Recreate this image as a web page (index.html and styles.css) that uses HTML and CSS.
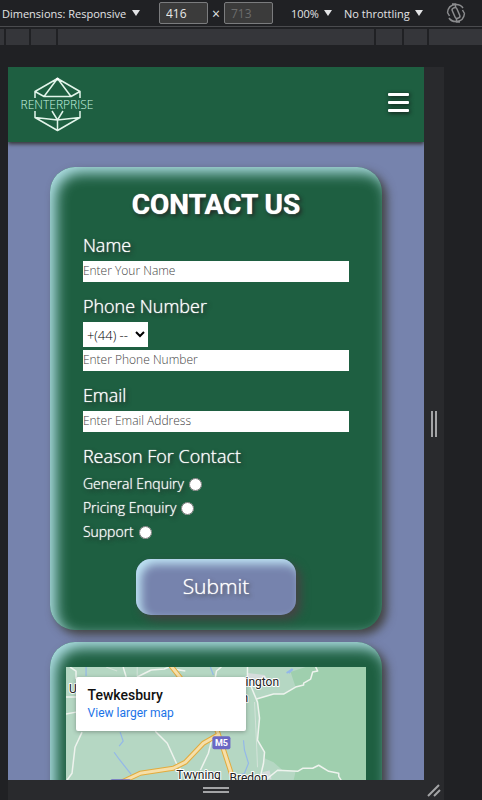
FILE: index.html
```html
<!DOCTYPE html>
<html lang="en">
<head>
<meta charset="utf-8">
<meta name="viewport" content="width=device-width, initial-scale=1">
<title>Renterprise - Contact Us</title>
<link rel="stylesheet" href="styles.css">
</head>
<body>
<div class="toolbar">
  <label class="picker"><select class="picker-select" aria-label="Device"><option>Dimensions: Responsive</option></select><svg class="caret" viewBox="0 0 8 6"><path d="M0 0h8L4 6z"/></svg></label>
  <div class="size">
    <input class="size-input" type="text" value="416" aria-label="Width">
    <span class="times">×</span>
    <input class="size-input" type="text" value="713" aria-label="Height" disabled>
  </div>
  <label class="picker"><select class="picker-select" aria-label="Zoom"><option>100%</option></select><svg class="caret" viewBox="0 0 8 6"><path d="M0 0h8L4 6z"/></svg></label>
  <label class="picker"><select class="picker-select" aria-label="Throttling"><option>No throttling</option></select><svg class="caret" viewBox="0 0 8 6"><path d="M0 0h8L4 6z"/></svg></label>
  <button class="rotate" type="button" aria-label="Rotate">
    <svg width="20" height="20" viewBox="0 0 20 20" fill="none" stroke="#8b8c8e" stroke-width="1.500">
      <rect x="7.500" y="4.500" width="5" height="11" rx="2" transform="rotate(-24 10 10)"/>
      <path d="M9 1.500C5 2 2 5 1.500 9.500M6 1h3.500v3.500M1.500 9.500L3.500 13M3 15c1.500 2.500 4 3.500 7 3.500"/>
      <path d="M11 18.500c4-.5 7-3.500 7.500-8M14 19h-3.500v-3.500M18.500 10.500L16.500 7M17 5c-1.500-2.500-4-3.500-7-3.500"/>
    </svg>
  </button>
</div>
<div class="ruler"><i></i><i></i><i></i><i></i><i></i><i></i><i></i></div>

<div class="stage">
  <div class="page">
    <header class="site-header">
      <a class="logo" href="#">
        <svg width="72" height="56" viewBox="0 0 72 56" role="img" aria-label="Renterprise">
          <g fill="none" stroke="#e2f5ea" stroke-width="1.500" stroke-linejoin="round">
            <path d="M13 21V14.500L35.500 1.500L58 14.500V21M13 14.500L22 19.500H49L58 14.500M22 19.500L35.500 1.500L49 19.500"/>
            <path d="M13 34V40.500L35.500 53.500L58 40.500V34M13 40.500L35.500 43L58 40.500M30 34L35.500 43L41 34M35.500 43V53.500"/>
          </g>
          <circle cx="35.500" cy="2" r="1.500" fill="#fff"/>
          <text class="logo-text" x="35" y="32" text-anchor="middle">RENTERPRISE</text>
        </svg>
      </a>
      <button class="menu" type="button" aria-label="Menu"><span></span><span></span><span></span></button>
    </header>

    <main class="content">
      <form class="card form-card">
        <h1 class="title">CONTACT US</h1>
        <div class="field">
          <label class="label" for="name">Name</label>
          <input class="input" id="name" type="text" placeholder="Enter Your Name">
        </div>
        <div class="field">
          <label class="label" for="phone">Phone Number</label>
          <select class="code" aria-label="Country code"><option>+(44) -- UK</option></select>
          <input class="input" id="phone" type="tel" placeholder="Enter Phone Number">
        </div>
        <div class="field">
          <label class="label" for="email">Email</label>
          <input class="input" id="email" type="email" placeholder="Enter Email Address">
        </div>
        <fieldset class="reasons">
          <legend class="label">Reason For Contact</legend>
          <label class="reason">General Enquiry<input type="radio" name="reason"></label>
          <label class="reason">Pricing Enquiry<input type="radio" name="reason"></label>
          <label class="reason">Support<input type="radio" name="reason"></label>
        </fieldset>
        <button class="submit" type="submit">Submit</button>
      </form>

      <section class="card map-card">
        <div class="map">
          <svg class="map-art" viewBox="0 0 300 200" preserveAspectRatio="xMinYMin slice">
            <rect width="300" height="200" fill="#b5d7c3"/>
            <path fill="#9fcfae" d="M190 32L207 27H217L229 20L224 5L239 0H300V200H215L227 113L229 104L216 103L207 95L198 91V85L191 73L193 51L191 35z"/>
            <path fill="#d5dcdc" d="M181 6L198 8L203 15L190 20L180 17zM196 105L203 103L205 112H194z"/>
            <g fill="none" stroke="#94b8e8" stroke-width="1.200">
              <path d="M20 0V9M54 65L57 74L53 79M48 85L53 92L65 107M144 0L147 8M177 73L178 83L182 96L178 106L170 109"/>
              <path d="M220 6L226 2L222 6" stroke-width="2"/>
            </g>
            <g fill="none" stroke="#d3e3d9" stroke-width="1">
              <path d="M71 0V10M40 0L51 4M188 35L190 75L191 100M60 200L100 160"/>
            </g>
            <g fill="none" stroke="#eef3ee" stroke-width="1.500" stroke-linejoin="round">
              <path d="M4 0L10 4V12M57 0L60 10M71 10L85 3L98 2L103 0M107 2L119 4M149 10L150 4L155 0M0 30H10M0 47L10 45"/>
              <path d="M89 64L101 76L111 98L118 106M16 65L9 80L6 106L1 113M146 70L142 86L134 103"/>
              <path d="M181 0V10L186 23L191 35L193 51L191 73L198 85L197 96L193 113"/>
              <path d="M190 32L207 27H217L229 20L237 18V16L244 12L246 5L251 4L249 0"/>
              <path d="M201 111L211 103L231 104L236 101L246 101L252 98L262 104L272 106V109L275 114"/>
            </g>
            <g fill="none" stroke-linejoin="round">
              <path stroke="#e3ab3c" stroke-width="5" d="M104 -2L115 12L151 64L157 82L168 116M151 68L137 76L119 95L107 101L74 106L55 115L40 119"/>
              <path stroke="#f6dfa9" stroke-width="3" d="M104 -2L115 12L151 64L157 82L168 116M151 68L137 76L119 95L107 101L74 106L55 115L40 119"/>
            </g>
            <rect x="146" y="69" width="18" height="13" rx="2" fill="#6b68c4"/>
            <rect x="44" y="112" width="21" height="13" rx="2" fill="#6b68c4"/>
            <text class="road-label" x="155" y="79" text-anchor="middle">M5</text>
            <g class="place">
              <text x="3" y="26">U</text>
              <text x="179" y="19">ington</text>
              <text x="175" y="35">n</text>
              <text x="110" y="112">Twyning</text>
              <text x="163" y="115">Bredon</text>
            </g>
          </svg>
          <div class="popup">
            <strong class="popup-title">Tewkesbury</strong>
            <a class="popup-link" href="#">View larger map</a>
          </div>
        </div>
      </section>
    </main>
  </div>
  <div class="handle handle-right"></div>
  <div class="handle handle-bottom"></div>
  <div class="handle handle-corner"><svg width="14" height="14" viewBox="0 0 14 14" stroke="#a3a4a6" stroke-width="2"><path d="M1 13L12 2M7 13L13 7"/></svg></div>
</div>
</body>
</html>
```
FILE: styles.css
```css
*,
*::before {
  box-sizing: border-box;
}

body {
  margin: 0;
  height: 100vh;
  display: flex;
  flex-direction: column;
  overflow: hidden;
  background: #202124;
  font-family: "Open Sans", "Noto Sans", sans-serif;
}

button, input, select {
  font-family: inherit;
  font-weight: inherit;
  margin: 0;
}

/* Toolbar */
.toolbar {
  display: flex;
  align-items: center;
  height: 27px;
  padding: 0 16px 0 2px;
  border-bottom: 1px solid #4a4b4e;
  color: #e3e4e6;
  font-size: 11px;
  white-space: nowrap;
}

.picker {
  display: flex;
  align-items: center;
  gap: 5px;
}

.picker-select {
  appearance: none;
  border: 0;
  padding: 0;
  background: none;
  color: inherit;
  font-size: 11px;
}

.caret {
  width: 8px;
  height: 6px;
  fill: #e3e4e6;
}

.size {
  display: flex;
  align-items: center;
  gap: 4px;
  margin: 0 18px 0 19px;
}

.size-input {
  width: 49px;
  height: 22px;
  padding: 0 6px;
  border: 1px solid #7b7c7e;
  border-radius: 2px;
  background: #3b3b3b;
  color: #e8e8e8;
  font-size: 12px;
}

.size-input:disabled {
  color: #6c6c6c;
}

.times {
  width: 8px;
  font-size: 14px;
  text-align: center;
}

.size + .picker {
  margin-right: 12px;
}

.rotate {
  display: flex;
  margin-left: auto;
  padding: 0;
  border: 0;
  background: none;
}

.ruler {
  display: grid;
  grid-template-columns: 4px 23px 25px 1fr 26px 23px 53px;
  column-gap: 2px;
  height: 16px;
  margin-top: 2px;
}

.ruler i {
  background: #35363a;
}

/* Viewport frame */
.stage {
  flex: 1;
  min-height: 0;
  display: grid;
  grid-template-columns: 1fr 20px;
  grid-template-rows: minmax(0, 1fr) 20px;
  padding: 22px 38px 0 8px;
}

.handle {
  display: flex;
  align-items: center;
  justify-content: center;
  background: #292a2d;
}

.handle-right::before {
  content: "";
  width: 6px;
  height: 26px;
  border: solid #a3a4a6;
  border-width: 0 2px;
}

.handle-bottom {
  grid-row: 2;
}

.handle-bottom::before {
  content: "";
  width: 26px;
  height: 6px;
  border: solid #a3a4a6;
  border-width: 2px 0;
}

/* Site */
.page {
  overflow: hidden;
  background: #7683ad;
  color: #fff;
  font-weight: 300;
}

.site-header {
  position: relative;
  display: flex;
  align-items: center;
  justify-content: space-between;
  height: 75px;
  padding: 0 15px 0 14px;
  background: #1e5f41;
  box-shadow: 0 2px 4px #333;
}

.logo svg {
  display: block;
  overflow: visible;
}

.logo-text {
  fill: #c6f5e0;
  font-size: 12px;
}

.menu {
  display: flex;
  flex-direction: column;
  gap: 5px;
  margin-bottom: 4px;
  padding: 0;
  border: 0;
  background: none;
}

.menu span {
  width: 21px;
  height: 3px;
  border-radius: 1px;
  background: #fff;
  box-shadow: 1px 1px 4px #111;
}

.content {
  display: flex;
  flex-direction: column;
  gap: 12px;
  padding: 25px 10% 0;
}

.card {
  border-radius: 25px;
  background: #1e5f41;
  box-shadow: 5px 5px 10px #444, inset 6px 6px 14px #b0e0e6;
}

.form-card {
  display: flex;
  flex-direction: column;
  padding: 20px 10% 15px;
  text-shadow: 0 0 1px #fff, 2px 2px 4px #222;
}

.title {
  margin: 0 0 8px;
  font-family: Roboto, sans-serif;
  font-size: 28px;
  line-height: 36px;
  font-weight: 700;
  text-align: center;
}

.field {
  display: flex;
  flex-direction: column;
  margin-bottom: 10px;
}

.label {
  padding: 0 0 2px;
  font-size: 18px;
  line-height: 28px;
}

.input {
  width: 100%;
  height: 21px;
  padding: 0 0 2px;
  border: 0;
  background: #fff;
  font-size: 12px;
}

.input::placeholder {
  color: #444;
}

.code {
  width: 65px;
  height: 25px;
  margin-bottom: 3px;
  border: 0;
  border-radius: 0;
  background: #fff;
  color: #000;
  font-size: 13px;
}

.reasons {
  margin: 0 0 15px;
  padding: 0;
  border: 0;
}

.reason {
  display: flex;
  align-items: center;
  gap: 5px;
  font-size: 14px;
  line-height: 24px;
}

.reason input {
  width: 13px;
  height: 13px;
}

.submit {
  align-self: center;
  width: 60%;
  height: 56px;
  padding: 0 0 2px;
  border: 0;
  border-radius: 15px;
  background: #7683ad;
  box-shadow: 5px 5px 10px #444, inset 5px 5px 10px #bfe4f5;
  color: #fff;
  font-size: 21px;
  text-shadow: 0 0 1px #fff, 2px 2px 4px #444;
}

/* Map */
.map-card {
  padding: 25px 16px;
}

.map {
  position: relative;
  height: 200px;
  overflow: hidden;
  font-family: Roboto, sans-serif;
  font-weight: 400;
}

.map-art {
  display: block;
  width: 100%;
  height: 100%;
}

.place {
  fill: #222;
  stroke: #fff;
  stroke-width: 2px;
  stroke-linejoin: round;
  paint-order: stroke;
  font-size: 12px;
}

.road-label {
  fill: #fff;
  font-size: 9px;
  font-weight: 700;
}

.popup {
  position: absolute;
  top: 10px;
  left: 10px;
  display: flex;
  flex-direction: column;
  width: 170px;
  padding: 9px 12px;
  border-radius: 2px;
  background: #fff;
  box-shadow: 0 1px 4px rgba(0, 0, 0, 0.3);
  line-height: 18px;
}

.popup-title {
  color: #111;
  font-size: 14px;
  font-weight: 500;
}

.popup-link {
  color: #1a73e8;
  font-size: 12px;
  text-decoration: none;
}
```
